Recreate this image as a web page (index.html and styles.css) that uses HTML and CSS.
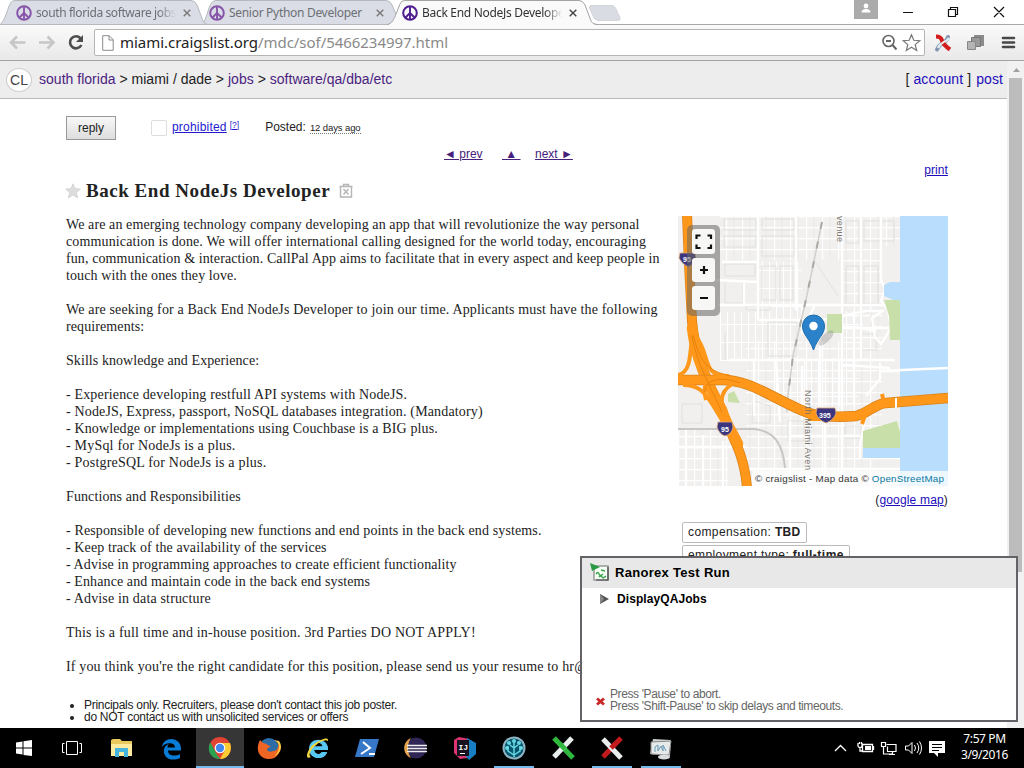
FILE: index.html
```
<!DOCTYPE html>
<html lang="en">
<head>
<meta charset="utf-8">
<title>Back End NodeJs Developer</title>
<link rel="stylesheet" href="styles.css">
</head>
<body>
<svg width="0" height="0" class="defs"><defs>
  <symbol id="peace" viewBox="0 0 16 16"><circle cx="8" cy="8" r="6.8" fill="none" stroke="currentColor" stroke-width="2"/><path d="M8 1v14M8 8l-5 5M8 8l5 5" stroke="currentColor" stroke-width="1.9" fill="none"/></symbol>
  <symbol id="close" viewBox="0 0 8 8"><path d="M.7.7l6.6 6.6M7.3.7L.7 7.3" stroke="currentColor" stroke-width="1.4" fill="none"/></symbol>
</defs></svg>
<div class="desktop">
  <div class="tabstrip">
    <svg class="tabshapes" width="1024" height="25" viewBox="0 0 1024 25">
      <path d="M0 24.5H1024" stroke="#a9a9a9"/>
      <path d="M201 24.5C206 24 208 6 212 2.500Q213 .5 216 .5H386Q390 .5 392 5L399 21Q400 24 404 24.500Z" fill="#dadde5" stroke="#b5b8bd"/>
      <path d="M0 24.500C5 22 8 6 11 2.500Q12 .5 15 .5H191Q195 .5 197 5L203 21Q204 24 208 24.500Z" fill="#dadde5" stroke="#b5b8bd"/>
      <path d="M387 25C392 24 394 19 396 14L400 4Q401 .5 405 .5H579Q583 .5 585 5L591 21Q592 24 597 25Z" fill="#fafafa"/>
      <path d="M387 24.500C392 24 394 19 396 14L400 4Q401 .5 405 .5H579Q583 .5 585 5L591 21Q592 24 597 24.500" fill="none" stroke="#a4a4a4"/>
      <path d="M591 5.500H612Q615 6 616 9L620 18Q621 20.500 617 20.500H599Q595 20.500 593.500 17L589.500 8Q589 6 591 5.500Z" fill="#d9dce2" stroke="#d2d4d9"/>
    </svg>
    <div class="tabs">
      <div class="tab t1"><svg class="fav"><use href="#peace"/></svg><span class="tt">south florida software jobs</span><svg class="x"><use href="#close"/></svg></div>
      <div class="tab t2"><svg class="fav"><use href="#peace"/></svg><span class="tt">Senior Python Developer</span><svg class="x"><use href="#close"/></svg></div>
      <div class="tab t3"><svg class="fav"><use href="#peace"/></svg><span class="tt">Back End NodeJs Develope</span><svg class="x"><use href="#close"/></svg></div>
    </div>
    <svg class="winctl" width="172" height="24" viewBox="852 0 172 24">
      <rect x="854" y="0" width="24" height="19" fill="#ababab"/><circle cx="866" cy="6" r="2.400" fill="#fff"/><path d="M861.500 12.500q0-3.500 4.500-3.500t4.500 3.500z" fill="#fff"/>
      <path d="M903 12.500h10M948.500 9.500h7v7h-7zM950.500 9.500v-2h7v7h-2M994 7l10 10M1004 7l-10 10" fill="none" stroke="#111" stroke-width="1.200"/>
    </svg>
  </div>
  <div class="toolbar">
    <svg width="94" height="35" viewBox="0 25 94 35">
      <path d="M25.500 42.500H11M17 36.500l-6 6 6 6M39 42.500h14.500M47.500 36.500l6 6-6 6" fill="none" stroke="#c6c6c6" stroke-width="2.500"/>
      <path d="M80.500 38.300a6 6 0 1 0 .9 6.700" fill="none" stroke="#4d4d4d" stroke-width="2.600"/><path d="M83 35v7h-7z" fill="#4d4d4d"/>
    </svg>
    <div class="omnibox">
      <svg width="12" height="16" viewBox="0 0 12 16"><path d="M.7.7h6.500l4 4v10.600H.7zM7 .7v4.300h4.200" fill="#fff" stroke="#8a8a8a"/></svg>
      <span class="url"><b>miami.craigslist.org</b>/mdc/sof/5466234997.html</span>
      <svg class="omniicons" width="42" height="24" viewBox="880 31 42 24"><circle cx="888.500" cy="41" r="5.500" fill="none" stroke="#666" stroke-width="1.600"/><path d="M886 41h5M892.500 45l4 4.500" stroke="#666" stroke-width="2" fill="none"/><path d="M911.500 34.800l2.300 5.500 6 .4-4.600 3.900 1.500 5.900-5.200-3.200-5.200 3.200 1.500-5.900-4.600-3.900 6-.4z" fill="#fff" stroke="#777" stroke-width="1.200"/></svg>
    </div>
    <svg width="98" height="35" viewBox="926 25 98 35">
      <path d="M937 49.500Q939 45 943 43T948 37" fill="none" stroke="#8196ad" stroke-width="4" stroke-linecap="round"/><path d="M938 48q2-4 5-5t6-5" fill="none" stroke="#dbe9f2" stroke-width="2.500"/><path d="M936 36.500q5 0 6 4t8 9" fill="none" stroke="#d31d1d" stroke-width="4.200"/><path d="M941 44l4-3" stroke="#eee" stroke-width="2"/>
      <path d="M974 35h10v11h-10z" fill="#8c8c8c"/><path d="M971.500 37.500h9v9h-9z" fill="#999" stroke="#777"/><path d="M967.500 41.500h8v8h-8z" fill="#b4b4b4" stroke="#888"/>
      <path d="M1003 38h11M1003 42.500h11M1003 47h11" stroke="#484848" stroke-width="2.600" stroke-linecap="round"/>
    </svg>
  </div>
  <div class="viewport">
    <div class="page">
      <header class="crumbs">
        <span class="cl">CL</span>
        <nav><a>south florida</a> &gt; miami / dade &gt; <a>jobs</a> &gt; <a>software/qa/dba/etc</a></nav>
        <div class="acct">[ <a>account</a> ] <a>post</a></div>
      </header>
      <div class="actions"><span class="reply">reply</span><i class="flag"></i><a class="pro">prohibited</a><sup>[?]</sup><span class="posted">Posted:</span><span class="ago">12 days ago</span></div>
      <div class="pager"><a class="prev">◄ prev</a><a class="up">&nbsp;▲&nbsp;</a><a class="next">next ►</a></div>
      <div class="print"><a>print</a></div>
      <h1><svg width="16" height="16" viewBox="0 0 16 16"><path d="M8 .8l2 4.900 5.300.4-4 3.500 1.300 5.200L8 12l-4.600 2.800 1.300-5.200-4-3.500L6 5.700z" fill="#ddd" stroke="#d4d4d4"/></svg><span>Back End NodeJs Developer</span><svg width="14" height="16" viewBox="0 0 14 16"><path d="M.5 3.500h13M4.500 3V1.500h5V3M1.500 3.500v10.500h11V3.500M4.500 6l5 5.500M9.500 6l-5 5.500" fill="none" stroke="#b5b5b5" stroke-width="1.400"/></svg></h1>
      <div class="columns">
        <main>
          <section class="post"><span class="l1">We are an emerging technology company developing an app that will revolutionize the way personal</span><br>
<span class="l2">communication is done. We will offer international calling designed for the world today, encouraging</span><br>
<span class="l1">fun, communication &amp; interaction. CallPal App aims to facilitate that in every aspect and keep people in</span><br>
<span class="l1">touch with the ones they love.</span><br><br>
<span class="l5">We are seeking for a Back End NodeJs Developer to join our time. Applicants must have the following</span><br>
<span class="l1">requirements:</span><br><br>
<span class="l0">Skills knowledge and Experience:</span><br><br>
<span class="l5">- Experience developing restfull API systems with NodeJS.</span><br>
<span class="l5">- NodeJS, Express, passport, NoSQL databases integration. (Mandatory)</span><br>
<span class="l2">- Knowledge or implementations using Couchbase is a BIG plus.</span><br>
- MySql for NodeJs is a plus.<br>
- PostgreSQL for NodeJs is a plus.<br><br>
<span class="l1">Functions and Responsibilities</span><br><br>
<span class="l2">- Responsible of developing new functions and end points in the back end systems.</span><br>
<span class="l1">- Keep track of the availability of the services</span><br>
<span class="l1">- Advise in programming approaches to create efficient functionality</span><br>
<span class="l1">- Enhance and maintain code in the back end systems</span><br>
<span class="l5">- Advise in data structure</span><br><br>
This is a full time and in-house position. 3rd Parties DO NOT APPLY!<br><br>
<span class="l5">If you think you're the right candidate for this position, please send us your resume to hr@</span></section>
          <ul class="notices"><li>Principals only. Recruiters, please don't contact this job poster.</li><li>do NOT contact us with unsolicited services or offers</li></ul>
        </main>
        <aside>
          <svg class="map" width="270" height="270" viewBox="0 0 270 270">
            <defs>
              <pattern id="blocks" width="16" height="11" patternUnits="userSpaceOnUse"><path d="M0 .5H16M.5 0V11" stroke="#fff" stroke-width="1.300"/><path d="M8 0V11" stroke="#e9e8e6" stroke-width=".7"/></pattern>
              <pattern id="lots" width="7" height="18" patternUnits="userSpaceOnUse"><path d="M0 .5H7M.5 0V18" stroke="#fff" stroke-width="1.200"/></pattern>
            </defs>
            <rect width="270" height="270" fill="#f1f0ee"/>
            <path d="M42 0H165V44H42zM165 30H204V270H165zM165 0H222V30H165zM68 125H165V270H68zM0 212H50V270H0z" fill="url(#blocks)"/>
            <path d="M80 46H124V145H80zM42 96H80V145H42zM96 145H180V190H96zM165 95H185V145H165z" fill="url(#lots)"/>
            <g fill="none" stroke="#dddcda" stroke-width=".8"><path d="M47 48H77V60H47zM47 65H65V87H47zM68 90H92V94H68zM138 47L160 80M90 106H119V140H90zM4 188H24V207H4zM47 117V143M182 96H193V111H182zM183 118H198V134H183zM75 185L92 190V207H74zM110 205H126V225H110zM167 210H183V222H167zM46 3H78V14H46zM46 20H78V31H46zM84 3H116V14H84zM84 20H116V40H84zM168 5H181V27H168zM186 5H216V25H186zM168 50H181V88H168zM186 50H200V88H186zM84 50H98V84H84zM102 50H115V84H102z"/></g>
            <g fill="none" stroke="#fff" stroke-width="2.300"><path d="M80 0V104M118 0V94M164 0V270M183 0V145M44 46H79M35 64L80 66M40 89H222M66 64V90M80 104H145L188 95H204M124 118V88M137 89L128 108M164 112H222M51 144H217M76 145V200M124 150V204M98 145L102 206M165 149L212 152M142 106V190M203 0V64L207 73L203 85L210 94L213 112L203 128L197 121L194 102L206 94M183 112L198 115M188 180L202 163V147M203 155H270M187 202L182 230V242M0 231H68M8 212V270M25 219V270M45 225V270M112 205V270M147 202V270M185 242H222M112 220H182M71 253H222"/></g>
            <path d="M222 0H270V270H222V242H185V232H222V84H215L206 80V69L212 66H222Z" fill="#b9ddfc"/>
            <path d="M206 84H222V124H212L211 100ZM149 98H164V117H149ZM185 215L219 205L222 216V232H185ZM50 178L56 175L62 187L50 186Z" fill="#c9dfa9"/>
            <path d="M203 155L224 154L270 152" stroke="#fff" stroke-width="2.500" fill="none"/>
            <path d="M144 6L129 79L115 140L109 187V196" fill="none" stroke="#d0cfcb" stroke-width="1.500"/>
            <path d="M144 6L129 79L115 140L109 187" fill="none" stroke="#aaa9a4" stroke-width="2" stroke-dasharray="7 13"/>
            <path d="M0 213H76C97 215 105 229 107 252" fill="none" stroke="#c8c7c4" stroke-width="2"/>
            <g fill="none"><path d="M9-2L11 48L14 105C17 140 29 166 44 194C49 214 66 232 69 272" stroke="#d98116" stroke-width="10"/><path d="M9-2L11 48L14 105C17 140 29 166 44 194C49 214 66 232 69 272" stroke="#ff981a" stroke-width="8.500"/>
            <path d="M14 112C18 145 29 166 44 194C48 208 56 219 60 228" stroke="#ff981a" stroke-width="10.500" stroke-linecap="round"/>
            <path d="M0 164H42C70 163 91 180 123 194Q141 203 178 200C190 197 199 187 208 187L270 182" stroke="#d98116" stroke-width="10.500"/><path d="M0 164H42C70 163 91 180 123 194Q141 203 178 200C190 197 199 187 208 187L270 182" stroke="#ff981a" stroke-width="9"/>
            <path d="M17 119C34 140 22 160 51 160M14 121C12 145 11 157 0 159M5 169C25 168 31 183 44 204M28 184C22 161 34 163 61 165C40 173 42 184 47 206M130 203L173 203M204 178L206 187M184 208L187 199" stroke="#ff981a" stroke-width="4"/><path d="M15 119C22 145 28 155 53 160M27 176C26 163 43 160 62 167M14 120C19 148 32 170 44 196" stroke="#e5830d" stroke-width="1"/></g>
            <path d="M218 182V192" stroke="#fff" stroke-width="2"/>
            <g fill="#3c367f" stroke="#e0a97f" stroke-width=".8"><path d="M2 37H17L18 42Q16 49 10 51Q4 48 1 42Z"/><path d="M40 206H54L55 211Q54 218 47 220Q41 218 39 211Z"/><path d="M139 192H157L158 197Q156 204 148 207Q140 204 138 197Z"/></g>
            <g class="shield"><text x="5" y="46">95</text><text x="43" y="216">95</text><text x="141" y="202">395</text></g>
            <g class="street"><text transform="translate(159 0) rotate(90)" textLength="26">venue</text><text transform="translate(127 174) rotate(90)" textLength="80">North Miami Aven</text></g>
            <rect x="9" y="9" width="33" height="91" rx="5" fill="#666" opacity=".55"/>
            <g fill="#f7f7f5"><rect x="14" y="13" width="23" height="25" rx="3"/><rect x="14" y="42" width="23" height="24" rx="3"/><rect x="14" y="70" width="23" height="24" rx="3"/></g>
            <path d="M22.500 19.500H18.500V23M29.500 19.500H33V23M18.500 28.500V32H22.500M33 28.500V32H29.500M22 54H30M26 50V58M22 82H30" fill="none" stroke="#111" stroke-width="2.200"/>
            <ellipse cx="148" cy="122" rx="10" ry="4" transform="rotate(-45 148 122)" fill="#777" opacity=".3"/>
            <path d="M135.500 134C131 121 124.500 119 124.500 110A11 11 0 0 1 146.500 110C146.500 119 140 121 135.500 134Z" fill="#2b82cb" stroke="#1b6dad"/><circle cx="135.500" cy="110" r="4.200" fill="#fff"/>
            <rect x="74" y="255" width="196" height="15" fill="#fff" opacity=".75"/>
            <text class="credit" x="77" y="266" textLength="189">© craigslist - Map data © <tspan>OpenStreetMap</tspan></text>
          </svg>
          <div class="google">(<a>google map</a>)</div>
          <div class="attrs"><span>compensation: <b>TBD</b></span><span>employment type: <b>full-time</b></span></div>
        </aside>
      </div>
    </div>
    <div class="scroll"><svg width="15" height="16"><path d="M4 11h7l-3.500-4z" fill="#a0a0a0"/></svg><i></i></div>
  </div>
  <div class="dialog">
    <div class="dhead"><svg width="20" height="20" viewBox="0 0 20 20"><path d="M4 4h14v14H4z" fill="#f5fff5" stroke="#999" stroke-width="1.500"/><path d="M18 5v13H6" fill="none" stroke="#444" stroke-width="1.200"/><path d="M0 1l10 4-8 4z" fill="#299a43"/><path d="M6 12q2-3 3 0t4 0M9 15q2-2 3 0t4-1M11 8l4 1" stroke="#38a54a" stroke-width="1.400" fill="none"/></svg><b>Ranorex Test Run</b></div>
    <div class="djob"><svg width="11" height="10"><path d="M1 0l9 5-9 5z" fill="#555"/><path d="M1 0v10l4-5z" fill="#888"/></svg><b>DisplayQAJobs</b></div>
    <div class="dfoot"><svg width="9" height="9"><path d="M1 1.500l7 6M8 1.500l-7 6" stroke="#c92626" stroke-width="2.800"/></svg><p><span>Press 'Pause' to abort.</span><br><span>Press 'Shift-Pause' to skip delays and timeouts.</span></p></div>
  </div>
  <footer class="taskbar">
    <svg width="690" height="40" viewBox="0 728 690 40">
      <path d="M16 742.500l6.500-1v6H16zM23.500 741.300l8.500-1.200v7.400h-8.500zM16 748.500h6.500v6l-6.500-1zM23.500 748.500H32v7.600l-8.500-1.200z" fill="#fff"/>
      <path d="M66.500 741.500h11v13h-11zM64.500 743.500h-2v9h2M79.500 743.500h2v9h-2" fill="none" stroke="#fff"/>
      <path d="M111 740l2-1h7l2 2h10v15h-21z" fill="#e9c85c"/><path d="M111 744h21v12h-21z" fill="#ffeba0"/><path d="M115 748h13v9h-4v-5h-5v5h-4z" fill="#46b4dc"/>
      <path d="M162 747c1-11 19-11 19 2v1.500h-13c0 6 8 6 12 3.500v4c-9 4-17 0-16-8 0-3 2-5 5-6-1 1-1.500 2-1.500 3.500h7.500c0-6-11-5-13-.5z" fill="#087cd6"/>
      <path d="M196 728h48v40h-48z" fill="#363636"/><path d="M196 766h48v2h-48z" fill="#76b9ed"/>
      <circle cx="220" cy="748" r="11" fill="#e14435"/><path d="M210.500 742.500L217 755l3 4c-9 0-14-9-9.500-16.500z" fill="#29a352"/><path d="M220 743h10c3 8-2 16-10 16l5-9z" fill="#fbcd33"/><circle cx="220" cy="748" r="5.300" fill="#fff"/><circle cx="220" cy="748" r="4.200" fill="#4386ef"/>
      <circle cx="269" cy="747.500" r="9.500" fill="#2d6ca6"/><path d="M260 740c-5 9-1 19 9 19 9 0 13-8 10-16-1 6-3 8-6 8-2 1-6 1-6-2l4-3c-4 0-4-3-8-3z" fill="#ee6524"/><path d="M274 740c7 3 6 12 0 16 7-2 9-10 5-15z" fill="#ffc847"/>
      <path d="M328 750h-14c1 5 6 5 8 2h5c-2 9-18 8-18-3 0-13 20-12 19 1zm-14-3.500h8.500c-1-5-8-5-8.500 0z" fill="#58c8f3"/><path d="M311 757c-7 4-4-8 3-13s15-8 14-3c-2-2-8 0-13 5s-7 9-4 11z" fill="#f1d741"/><path d="M328 750h-14c1 5 6 5 8 2h5c-1.500 6-9 7.500-14 4-3-5 0-9 2-9.500h13z" fill="#58c8f3"/>
      <path d="M360 739h19l-5 18h-19z" fill="#3777c8"/><path d="M363 742l7 6-9 6M369 754h6" stroke="#fff" stroke-width="2" fill="none"/>
      <circle cx="416" cy="748" r="10.500" fill="#302655"/><path d="M411 738c-9 4-9 16 0 20-4-5-4-15 0-20z" fill="#e7a34b"/><path d="M407 745.500h20M407 748.500h20M407 751.500h20" stroke="#eee" stroke-width="1.600"/>
      <path d="M454 740l5-3 10 2 4 18-13 2-6-6z" fill="#dd3571"/><path d="M467 738l9 5v11l-7 6-5-6z" fill="#187fc5"/><path d="M457 740h12v16h-12z" fill="#18121e"/><g fill="#fff" class="ij"><text x="458.500" y="750">IJ</text><path d="M460 753h5v1h-5z"/></g>
      <circle cx="514" cy="748" r="11.500" fill="#8fb5c4"/><circle cx="514" cy="748" r="9.500" fill="#07546c"/><path d="M514 740v17M514 755l-6-4v-5M514 755l6-4v-5M514 748l-4-3M514 748l4-3" stroke="#65d8e4" stroke-width="1.500" fill="none"/><g fill="#65d8e4"><circle cx="509" cy="743" r="2"/><circle cx="514" cy="741" r="2"/><circle cx="519" cy="743" r="2"/><circle cx="507" cy="748" r="2"/><circle cx="521" cy="748" r="2"/></g>
      <path d="M554 738l19 20" stroke="#30b83e" stroke-width="5"/><path d="M572 738l-18 19" stroke="#e8eeee" stroke-width="5"/><path d="M560 744l5 5" stroke="#30b83e" stroke-width="5"/>
      <path d="M621 738l-18 19" stroke="#c31b1c" stroke-width="5"/><path d="M603 739l18 19" stroke="#e9eded" stroke-width="5"/><path d="M615 744l-4 4" stroke="#c31b1c" stroke-width="5"/>
      <path d="M653 739l18 1-1 16-20-2z" fill="#cfd5d5"/><path d="M651 742l20-1-2 14-18-1z" fill="#e7eaea" stroke="#888"/><path d="M655 752v-5l3-2v6l3-5 2 5v-6l3 6" fill="none" stroke="#6599b4"/><ellipse cx="664" cy="757" rx="6" ry="2.500" fill="#d9dddd"/>
      <path d="M494 766h40v2h-40zM592 766h40v2h-40zM641 766h40v2h-40z" fill="#76b9ed"/>
    </svg>
    <div class="tray"><svg width="115" height="40" viewBox="832 728 115 40">
      <path d="M835 751l5.500-5.500L846 751M862.500 744.500h10v7h-10zM873.500 746v4M858 743v3c0 2 4 2 4 0v-3M860 747v4h2M859.500 742v2M861.500 742v2" fill="none" stroke="#fff" stroke-width="1.300"/><path d="M865 746h6v4h-6z" fill="#fff"/>
      <path d="M886.500 744.500h9.500v7h-8.500v-5M881.500 742.500h4v4h-4zM883.500 747v7h9M889 754.500h6M892.500 752v2" fill="none" stroke="#fff" stroke-width="1.200"/>
      <path d="M905.500 746h3l3.500-3.500v11l-3.500-3.500h-3zM914.500 745q2 3 0 6M917 743q3.500 5 0 10M919.500 741.500q4 6.500 0 13" fill="none" stroke="#fff"/>
      <path d="M929 741h16v12h-7v4l-4-4h-5z" fill="#fff"/><path d="M932 744.500h10M932 747.500h10M932 750.500h7" stroke="#000"/>
    </svg><div class="clock"><span>7:57 PM</span><span>3/9/2016</span></div></div>
  </footer>
</div>
</body>
</html>
```
FILE: styles.css
```
*{box-sizing:border-box}
body{margin:0;overflow:hidden;font-family:"Liberation Sans",Arial,sans-serif;color:#222}
svg{display:block;flex:none}
.defs{position:absolute}
.desktop{width:1024px;height:768px;display:flex;flex-direction:column;position:relative;overflow:hidden;background:#fff}
.tabstrip{height:25px;position:relative;display:flex;justify-content:space-between;flex:none}
.tabshapes{position:absolute;left:0;top:0}
.tabs{display:flex;position:relative;padding-left:16px}
.tab{display:flex;align-items:center;width:193px;height:25px;font:12px "Noto Sans",sans-serif;color:#6c6f75;letter-spacing:-.3px}
.t3{color:#333}
.fav{width:16px;height:16px;color:#8756aa;margin-top:1px}
.t3 .fav{color:#4e1e90}
.tt{width:143px;margin-left:4px;white-space:nowrap;line-height:20px;-webkit-mask-image:linear-gradient(90deg,#000 86%,transparent 98%);mask-image:linear-gradient(90deg,#000 86%,transparent 98%)}
.t1 .tt{letter-spacing:-.4px}
.t2 .tt{-webkit-mask-image:none;mask-image:none}
.x{width:8px;height:8px;margin-left:4px;color:#777}
.t3 .x{color:#444}
.winctl{position:relative}
.toolbar{height:36px;flex:none;display:flex;background:linear-gradient(#fafafa,#e9e9e9);border-bottom:1px solid #a3a3a3}
.omnibox{width:831px;height:27px;margin-top:4px;border:1px solid #b5b5b5;border-radius:2px;background:#fff;display:flex;align-items:center;padding:0 2px 0 7px}
.url{font:15px/20px "Noto Sans",sans-serif;letter-spacing:-.04px;color:#8a8a8a;margin:-1px 0 0 6px;flex:1;white-space:nowrap}
.url b{font-weight:400;color:#222}
.toolbar>svg:last-child{margin-left:1px}
.viewport{height:667px;flex:none;display:flex}
.page{width:1007px;overflow:hidden}
.crumbs{height:38px;background:#ededed;border-bottom:1px solid #bbb;display:flex;align-items:center;font-size:14px;padding:0 4px 0 6px;white-space:nowrap}
.crumbs nav{letter-spacing:.02px}
.crumbs a{color:#4b2380}
.cl{width:26px;height:24px;border:1px solid #ccc;border-radius:50%;background:#fff;text-align:center;line-height:23px;font-size:14px;margin-right:7px;color:#444}
.acct{margin-left:auto;letter-spacing:.1px}
.crumbs .acct a{color:#1c0cba}
.acct a:last-child{margin-left:1px}
.acct,.crumbs nav{margin-top:-2px}
.actions{display:flex;height:25px;margin:16px 0 0 66px;align-items:center;font-size:12px;white-space:nowrap}
.reply{width:50px;height:24px;border:1px solid #999;background:linear-gradient(#f8f8f8,#ddd);line-height:22px;text-align:center}
.flag{width:16px;height:16px;border:1px solid #ddd;border-radius:2px;margin:0 5px 0 35px}
.pro,sup{color:#2219d0;text-decoration:underline}
.pro{letter-spacing:.2px;margin-top:-2px}
sup{font-size:8.500px;margin:-6px 0 0 3px;line-height:10px}
.posted{margin:-2px 0 0 26px}
.ago{font-size:9.500px;border-bottom:1px dotted #777;margin:1px 0 0 4px;line-height:10px;letter-spacing:-.1px}
.pager{display:flex;height:17px;margin:6px 0 0 444px;font-size:12px;white-space:nowrap}
.pager a{color:#46207a;text-decoration:underline;line-height:16px}
.prev{width:58px}.up{width:33px}
.print{text-align:right;margin-right:59px;height:14px;line-height:14px;font-size:12px;letter-spacing:.1px}
.print a,.google a{color:#1c0cba;text-decoration:underline}
h1{margin:3px 0 0 65px;height:22px;display:flex;align-items:center;font:bold 19px/22px "Liberation Serif",serif;white-space:nowrap}
h1 span{margin:0 8px 0 5px;width:245px;letter-spacing:.54px}
.columns{display:flex;padding:14px 0 0 66px;height:540px}
main{width:612px;flex:none}
.post{font:14px/17px "Liberation Serif",serif;letter-spacing:.2px;white-space:nowrap}
.l0{letter-spacing:.07px}
.l1{letter-spacing:.1px}
.l2{letter-spacing:.13px}
.l5{letter-spacing:.16px}
.notices{margin:24px 0 0;padding:0 0 0 18px;font-size:12px;line-height:12px;letter-spacing:-.28px}
aside{width:270px}
.map{overflow:hidden}
.shield{font:bold 7px "Liberation Sans",sans-serif;fill:#fff}
.street{font:9px "Liberation Sans",sans-serif;fill:#77746d}
.credit{font:9.800px "Liberation Sans",sans-serif;fill:#333}
.credit tspan{fill:#0878a0}
.google{font-size:12px;text-align:right;line-height:14px;margin-top:7px;letter-spacing:.17px}
.attrs{display:flex;flex-direction:column;align-items:flex-start;gap:2px;margin:15px 0 0 4px;font-size:12px}
.attrs span{border:1px solid #bbb;border-radius:2px;height:21px;line-height:19px;padding:0 5px;letter-spacing:.4px}
.attrs span:last-child b{letter-spacing:.5px}
.attrs span:first-child b{letter-spacing:.3px}
.scroll{width:17px;background:#f1f1f1;padding-left:2px}
.scroll i{display:block;width:13px;height:494px;background:#bcbcbc;margin-top:1px}
.dialog{position:absolute;left:580px;top:556px;width:438px;height:166px;border:2px solid #646266;background:#fff;display:flex;flex-direction:column;color:#000}
.dhead{height:30px;background:#e8e8e8;display:flex;align-items:center;padding:0 0 2px 8px;font-size:13px;gap:5px;letter-spacing:.3px}
.djob{display:flex;align-items:center;gap:7px;padding:1px 0 0 17px;font-size:12px;height:21px;letter-spacing:.08px}
.dfoot{display:flex;align-items:center;gap:5px;margin:auto 0 8px 14px;font-size:12px;line-height:12px;color:#666}
.dfoot svg{margin-top:2px}
.dfoot p{margin:0;letter-spacing:-.39px}
.taskbar{height:40px;background:#000;display:flex;justify-content:space-between;flex:none}
.ij{font:bold 8px "Liberation Mono",monospace}
.tray{display:flex;width:192px}
.clock{width:75px;color:#fff;font:12px/16px "Noto Sans",sans-serif;text-align:center;padding-top:3px;display:flex;flex-direction:column;white-space:nowrap;letter-spacing:-.4px}
```
